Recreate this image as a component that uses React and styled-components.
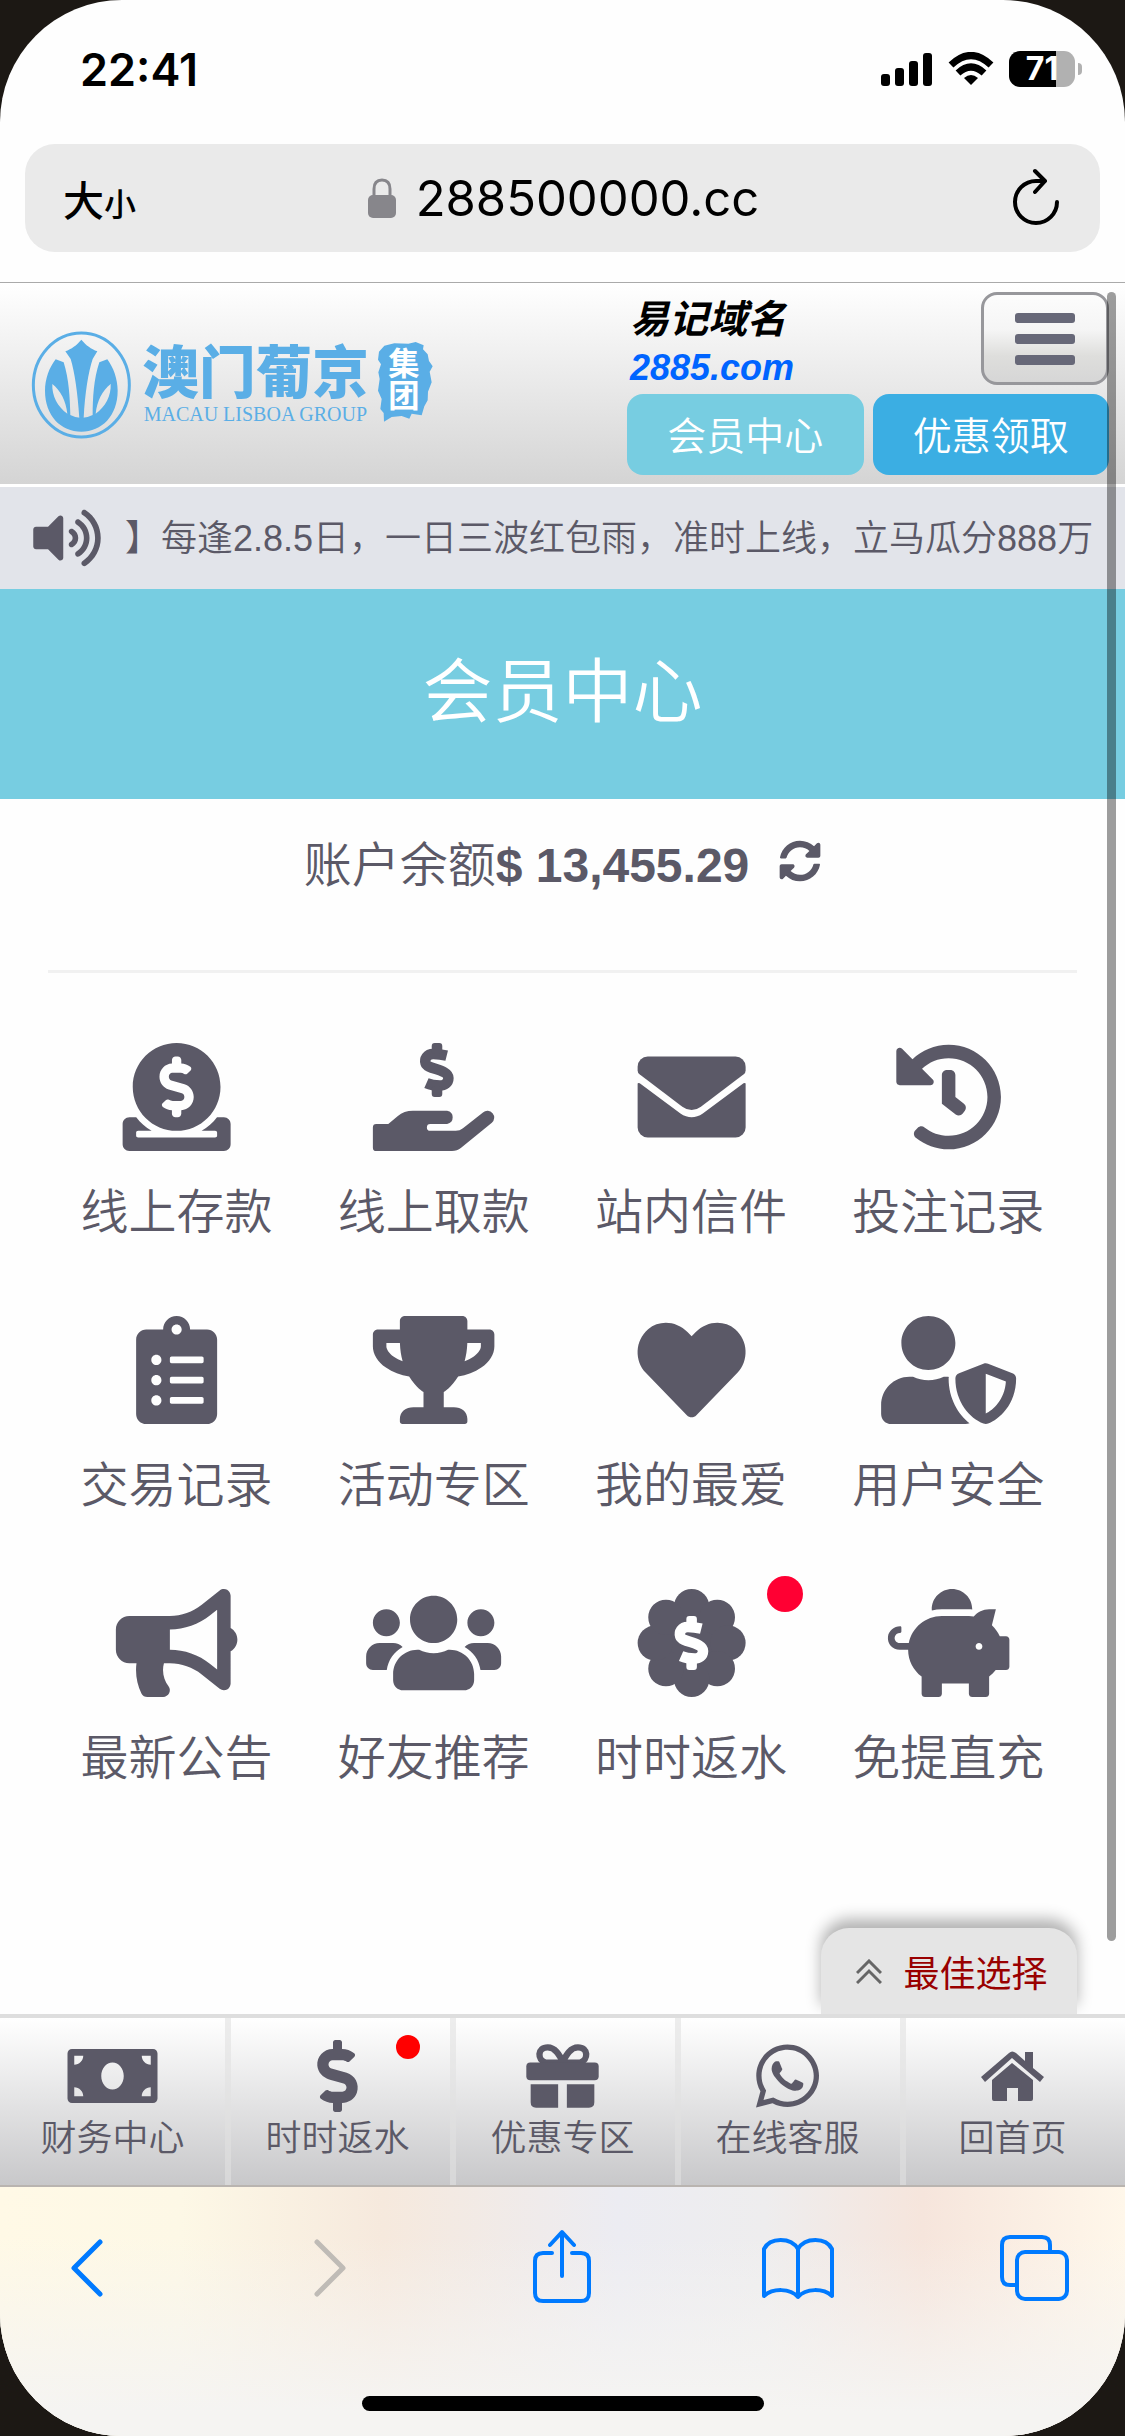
import React from 'react';
import styled, { createGlobalStyle } from 'styled-components';
import {
  FaBullhorn,
  FaClipboardList,
  FaDollarSign,
  FaDonate,
  FaHeart,
  FaHistory,
  FaMoneyBill,
  FaPiggyBank,
  FaSyncAlt,
  FaTrophy,
  FaUserShield,
  FaUsers,
  FaVolumeUp,
  FaWhatsapp,
} from 'react-icons/fa';

const ink = '#5b5967';
const sky = '#77cde1';
const iosBlue = '#007aff';

const DollarShape = ({ color }) => (
  <g fill={color}>
    <path
      d="M350 60C326 54 302 52 286 52C256 52 244 76 250 96C260 126 358 124 358 166C358 190 338 202 318 202C296 202 272 198 254 190"
      fill="none"
      stroke={color}
      strokeWidth="50"
    />
    <rect x="279" y="0" width="50" height="52" rx="14" />
    <rect x="279" y="204" width="50" height="52" rx="14" />
  </g>
);

const HandDollar = () => (
  <svg viewBox="0 0 576 512" fill="currentColor">
    <DollarShape color="currentColor" />
    <path d="M16 384H73L117 347Q148 321 190 321H352A32 32 0 0 1 352 384H272A16 16 0 0 0 272 416H393Q412 416 427 404L522 329A32 32 0 0 1 564 378L417 498Q400 512 375 512H16Q0 512 0 496V400Q0 384 16 384Z" />
  </svg>
);

const Envelope = () => (
  <svg viewBox="0 0 512 512" fill="currentColor">
    <path d="M48 64H464A48 48 0 0 1 512 112V130Q512 141 503 148L300 302Q256 334 212 302L9 148Q0 141 0 130V112A48 48 0 0 1 48 64Z" />
    <path d="M0 192Q2 187 10 191L203 334Q256 370 309 334L502 191Q510 187 512 192V400A48 48 0 0 1 464 448H48A48 48 0 0 1 0 400Z" />
  </svg>
);

const DollarBadge = () => (
  <svg viewBox="0 0 512 512" fill="currentColor">
    <circle cx="256" cy="256" r="190" />
    {[0, 45, 90, 135, 180, 225, 270, 315].map(angle => (
      <circle key={angle} cx="256" cy="84" r="84" transform={`rotate(${angle} 256 256)`} />
    ))}
    <g transform="translate(-48 128)">
      <DollarShape color="#fff" />
    </g>
  </svg>
);

const Gift = () => (
  <svg viewBox="78 372 216 191" fill="currentColor">
    <path
      d="M187 428H136C110 420 110 382 142 382C164 382 176 404 187 424C198 404 210 382 232 382C264 382 264 420 238 428Z"
      fill="none"
      stroke="currentColor"
      strokeWidth="19"
    />
    <rect x="78" y="427" width="216" height="53" rx="12" />
    <path d="M91 492H173V562H107Q91 562 91 546ZM199 492H281V546Q281 562 265 562H199Z" />
  </svg>
);

const House = () => (
  <svg viewBox="0 0 63 50" fill="currentColor">
    <path d="M0 26L28 2Q31 -1 35 2L44 10V1H52V17L63 26L59 31L31 7L4 31Z" />
    <path d="M11 29L31 12L52 29V48Q52 50 50 50H37V37H26V50H13Q11 50 11 48Z" />
  </svg>
);

const Logo = () => (
  <LogoArt viewBox="0 0 1260 390" role="img" aria-label="澳门葡京集团">
    <g fill="#5aaee6">
      <ellipse cx="169" cy="198" rx="144" ry="156" fill="none" stroke="#5aaee6" strokeWidth="9" />
      <path d="M169 62C184 80 198 89 217 97L203 120C190 160 180 220 176 298H163C158 220 149 160 137 120L121 97C140 89 154 80 169 62Z" />
      <path
        fillRule="evenodd"
        d="M92 121L116 130C132 180 135 240 136 288Q169 306 203 288C203 240 206 180 223 130L247 121C265 145 278 180 278 215C278 290 230 338 169 338C108 338 60 290 60 215C60 180 73 145 92 121ZM82 195C80 230 98 264 127 284C123 245 106 214 82 195ZM257 195C233 214 216 245 212 284C241 264 259 230 257 195Z"
      />
      <path d="M1062 98L1078 80L1108 73L1150 74L1172 69L1196 79L1194 91L1208 106L1212 126L1223 142L1214 158L1220 190L1209 218L1208 244L1198 262L1190 289L1160 284L1153 299L1130 291L1100 294L1077 308L1076 282L1066 270L1070 240L1059 215L1064 180L1060 160L1068 136L1059 122Z" />
      <text x="352" y="221" fontSize="170" fontWeight="900" fontFamily="'Noto Sans CJK SC', sans-serif">澳门葡京</text>
      <text x="356" y="307" fontSize="60" fontFamily="'Liberation Serif', serif">MACAU LISBOA GROUP</text>
    </g>
    <text
      x="1137"
      y="86"
      fill="#fff"
      fontSize="94"
      fontWeight="700"
      fontFamily="'Noto Sans CJK SC', sans-serif"
      writingMode="vertical-rl"
    >
      集团
    </text>
  </LogoArt>
);

const menu = [
  { label: '线上存款', icon: <FaDonate /> },
  { label: '线上取款', icon: <HandDollar /> },
  { label: '站内信件', icon: <Envelope /> },
  { label: '投注记录', icon: <FaHistory /> },
  { label: '交易记录', icon: <FaClipboardList /> },
  { label: '活动专区', icon: <FaTrophy /> },
  { label: '我的最爱', icon: <FaHeart /> },
  { label: '用户安全', icon: <FaUserShield /> },
  { label: '最新公告', icon: <FaBullhorn /> },
  { label: '好友推荐', icon: <FaUsers /> },
  { label: '时时返水', icon: <DollarBadge />, dot: true },
  { label: '免提直充', icon: <FaPiggyBank /> },
];

const tabs = [
  { label: '财务中心', icon: <FaMoneyBill />, height: 72 },
  { label: '时时返水', icon: <FaDollarSign />, height: 72, dot: true },
  { label: '优惠专区', icon: <Gift />, height: 64 },
  { label: '在线客服', icon: <FaWhatsapp />, height: 72 },
  { label: '回首页', icon: <House />, height: 50 },
];

const StatusBar = () => (
  <Status>
    <Clock>22:41</Clock>
    <StatusIcons>
      <svg width="52" height="33" viewBox="0 0 52 33">
        <rect x="0" y="21" width="9" height="12" rx="3" />
        <rect x="14" y="15" width="9" height="18" rx="3" />
        <rect x="28" y="8" width="9" height="25" rx="3" />
        <rect x="42" y="0" width="9" height="33" rx="3" />
      </svg>
      <svg width="46" height="34" viewBox="0 0 46 34">
        <g fill="none" stroke="#000" strokeWidth="7">
          <path d="M3 13Q23 -6 43 13" />
          <path d="M10 21Q23 9 36 21" />
        </g>
        <path d="M16 26Q23 20 30 26L23 33Z" />
      </svg>
      <Battery>
        <Charge>71</Charge>
      </Battery>
    </StatusIcons>
  </Status>
);

const BrowserBar = () => (
  <ToolBar>
    <ToolButton aria-label="后退">
      <svg width="80" height="80" viewBox="0 0 80 80"><path d="M53 14L27 40L53 66" strokeWidth="5" /></svg>
    </ToolButton>
    <ToolButton aria-label="前进" disabled>
      <svg width="80" height="80" viewBox="0 0 80 80"><path d="M33 14L59 40L33 66" strokeWidth="5" /></svg>
    </ToolButton>
    <ToolButton aria-label="分享">
      <svg width="80" height="80" viewBox="0 0 80 80">
        <path d="M31 25H22Q14 25 14 33V65Q14 73 22 73H60Q68 73 68 65V33Q68 25 60 25H51M41 48V5M29 17L41 4L53 17" />
      </svg>
    </ToolButton>
    <ToolButton aria-label="书签">
      <svg width="80" height="80" viewBox="0 0 80 80">
        <path d="M40 21C33 9 12 9 6 21V68C15 60 32 60 40 69C48 60 65 60 74 68V21C68 9 47 9 40 21V69" />
      </svg>
    </ToolButton>
    <ToolButton aria-label="标签页">
      <svg width="80" height="80" viewBox="0 0 80 80">
        <path d="M21 57H15Q7 57 7 49V17Q7 9 15 9H47Q55 9 55 17V23" />
        <rect x="22" y="24" width="50" height="47" rx="8" />
      </svg>
    </ToolButton>
  </ToolBar>
);

const App = () => (
  <>
    <GlobalStyle />
    <Screen>
      <StatusBar />
      <AddressBar>
        <TextSize type="button" aria-label="大小">大<small>小</small></TextSize>
        <Address>
          <svg width="28" height="40" viewBox="0 0 28 40">
            <path d="M6 18V11Q6 2 14 2T22 11V18" fill="none" stroke="#87868b" strokeWidth="3" />
            <rect y="17" width="28" height="23" rx="5" fill="#87868b" />
          </svg>
          288500000.cc
        </Address>
        <Reload type="button" aria-label="重新加载">
          <svg width="48" height="60" viewBox="0 0 48 60" fill="none" stroke="#000" strokeWidth="4" strokeLinecap="round" strokeLinejoin="round">
            <path d="M45 34A21 21 0 1 1 24 13H33M23 3L33 13L23 24" />
          </svg>
        </Reload>
      </AddressBar>

      <Page>
        <ScrollThumb />
        <Header>
          <Logo />
          <HeaderSide>
            <HeaderTop>
              <Domain>
                易记域名
                <a href="#domain">2885.com</a>
              </Domain>
              <MenuButton type="button" aria-label="菜单">
                <span />
                <span />
                <span />
              </MenuButton>
            </HeaderTop>
            <HeaderActions>
              <ActionButton type="button" $color={sky}>会员中心</ActionButton>
              <ActionButton type="button" $color="#3baee3">优惠领取</ActionButton>
            </HeaderActions>
          </HeaderSide>
        </Header>

        <Notice>
          <FaVolumeUp />
          <p>】每逢2.8.5日，一日三波红包雨，准时上线，立马瓜分888万</p>
        </Notice>

        <Banner>会员中心</Banner>

        <Main>
          <Balance>
            <span>账户余额<strong>$ 13,455.29</strong></span>
            <button type="button" aria-label="刷新余额"><FaSyncAlt /></button>
          </Balance>
          <MenuGrid>
            {menu.map(({ label, icon, dot }) => (
              <MenuItem href="#menu" key={label}>
                {icon}
                {label}
                {dot && <MenuDot />}
              </MenuItem>
            ))}
          </MenuGrid>
        </Main>

        <BestChoice type="button">
          <svg width="26" height="25" viewBox="0 0 26 25" fill="none" stroke="#666" strokeWidth="3">
            <path d="M1 14L13 2L25 14M1 24L13 12L25 24" />
          </svg>
          最佳选择
        </BestChoice>
        <TabBar>
          {tabs.map(({ label, icon, height, dot }) => (
            <Tab href="#tab" key={label}>
              <TabIcon $height={height}>{icon}</TabIcon>
              {label}
              {dot && <TabDot />}
            </Tab>
          ))}
        </TabBar>
      </Page>

      <Footer>
        <BrowserBar />
        <HomeIndicator />
      </Footer>
    </Screen>
  </>
);

const GlobalStyle = createGlobalStyle`
  * {
    box-sizing: border-box;
  }

  body {
    margin: 0;
    background: #1c1814;
    font-family: 'Liberation Sans', 'Noto Sans CJK SC', sans-serif;
    font-weight: 350;
    color: ${ink};
  }

  button {
    padding: 0;
    border: 0;
    background: none;
    color: inherit;
    font: inherit;
  }

  a {
    color: inherit;
    text-decoration: none;
  }

  svg {
    display: block;
    flex: none;
  }
`

const Screen = styled.div`
  display: flex;
  flex-direction: column;
  min-height: 100vh;
  overflow: hidden;
  border-radius: 122px;
  background: #fefefe;
`

const Status = styled.div`
  display: flex;
  align-items: center;
  justify-content: space-between;
  height: 144px;
  padding: 0 43px 6px 80px;
  color: #000;
`

const Clock = styled.time`
  font: 600 45px Inter, sans-serif;
`

const StatusIcons = styled.div`
  display: flex;
  align-items: center;
  gap: 15px;
`

const Battery = styled.div`
  display: flex;
  align-items: center;

  &::after {
    content: '';
    width: 4px;
    height: 12px;
    margin-left: 3px;
    border-radius: 0 6px 6px 0;
    background: #b1b1b1;
  }
`

const Charge = styled.span`
  width: 66px;
  border-radius: 11px;
  background: linear-gradient(90deg, #000 71%, #b1b1b1 71%);
  color: #fff;
  font: 700 32px/36px Inter, sans-serif;
  text-align: center;
`

const AddressBar = styled.div`
  display: flex;
  align-items: center;
  justify-content: space-between;
  height: 108px;
  margin: 0 25px 30px;
  padding: 0 40px 0 38px;
  border-radius: 30px;
  background: #eaeaea;
  color: #000;
`

const TextSize = styled.button`
  width: 76px;
  font-size: 41px;
  font-weight: 500;
  text-align: left;
  white-space: nowrap;

  small {
    font-size: 32px;
  }
`

const Address = styled.div`
  display: flex;
  align-items: center;
  gap: 20px;
  padding-left: 4px;
  font: 400 49px Inter, sans-serif;
`

const Reload = styled.button`
  display: flex;
  justify-content: flex-end;
  width: 76px;
`

const Page = styled.div`
  position: relative;
  display: flex;
  flex: 1;
  flex-direction: column;
  border-top: 1px solid #aaa;
`

const ScrollThumb = styled.div`
  position: absolute;
  z-index: 2;
  top: 9px;
  right: 9px;
  bottom: 246px;
  width: 9px;
  border-radius: 5px;
  background: rgba(0, 0, 0, 0.38);
`

const Header = styled.header`
  display: flex;
  align-items: center;
  justify-content: space-between;
  height: 204px;
  padding: 0 16px 0 25px;
  border-bottom: 3px solid #fff;
  background: linear-gradient(#fff, #d4d4d4);
`

const LogoArt = styled.svg`
  width: 420px;
  height: 130px;
`

const HeaderSide = styled.div`
  display: flex;
  flex-direction: column;
  gap: 9px;
  width: 482px;
`

const HeaderTop = styled.div`
  display: flex;
  justify-content: space-between;
  height: 93px;
`

const Domain = styled.div`
  display: flex;
  flex-direction: column;
  padding: 2px 0 0 3px;
  color: #000;
  font-size: 39px;
  font-style: italic;
  font-weight: 700;
  line-height: 52px;

  a {
    color: #0064ff;
    font-size: 36px;
    line-height: 44px;
  }
`

const MenuButton = styled.button`
  display: flex;
  flex-direction: column;
  align-items: center;
  justify-content: center;
  gap: 11px;
  width: 128px;
  height: 93px;
  border: 3px solid #97979b;
  border-radius: 16px;
  background: linear-gradient(#fcfcfc, #f5f5f5 40%, #dededc 70%, #d6d6d6);

  span {
    width: 60px;
    height: 10px;
    border-radius: 3px;
    background: #676878;
  }
`

const HeaderActions = styled.div`
  display: flex;
  gap: 9px;
`

const ActionButton = styled.button`
  flex: 1;
  height: 81px;
  padding-bottom: 4px;
  border-radius: 16px;
  background: ${props => props.$color};
  color: #fff;
  font-size: 39px;
`

const Notice = styled.div`
  display: flex;
  align-items: center;
  gap: 24px;
  height: 102px;
  padding-left: 33px;
  overflow: hidden;
  background: #e2e4ea;
  font-size: 36px;
  white-space: nowrap;

  svg {
    width: 68px;
    height: 60px;
  }

  p {
    margin: 0;
    padding-bottom: 6px;
  }
`

const Banner = styled.h1`
  margin: 0;
  background: ${sky};
  color: #fff;
  font-size: 70px;
  font-weight: 350;
  line-height: 208px;
  height: 210px;
  text-align: center;
`

const Main = styled.main`
  flex: 1;
  padding: 0 48px;
`

const Balance = styled.div`
  display: flex;
  align-items: center;
  justify-content: center;
  gap: 30px;
  height: 174px;
  padding-bottom: 48px;
  border-bottom: 3px solid #f1f1f1;
  font-size: 48px;

  strong {
    font-weight: 700;
  }

  svg {
    width: 42px;
    height: 42px;
  }
`

const MenuGrid = styled.nav`
  display: grid;
  grid-template-columns: repeat(4, 1fr);
  row-gap: 65px;
  padding-top: 70px;
`

const MenuItem = styled.a`
  position: relative;
  display: flex;
  flex-direction: column;
  align-items: center;
  gap: 24px;
  font-size: 48px;
  line-height: 76px;

  svg {
    width: 100%;
    height: 108px;
  }
`

const MenuDot = styled.i`
  position: absolute;
  top: -13px;
  right: 17px;
  width: 36px;
  height: 36px;
  border-radius: 50%;
  background: #ff0033;
`

const BestChoice = styled.button`
  display: flex;
  align-items: center;
  align-self: flex-end;
  justify-content: center;
  gap: 21px;
  width: 256px;
  height: 86px;
  margin-right: 48px;
  padding-left: 6px;
  border-radius: 28px 28px 0 0;
  background: #e5e5e5;
  box-shadow: 0 -9px 15px rgba(0, 0, 0, 0.3);
  color: #990000;
  font-size: 36px;
  font-weight: 400;
`

const TabBar = styled.nav`
  position: relative;
  display: grid;
  grid-template-columns: repeat(5, 1fr);
  height: 173px;
  border-top: 4px solid #dedede;
  border-bottom: 2px solid #b9b4b0;
  background: linear-gradient(#fff, #c8c8ca);
`

const Tab = styled.a`
  position: relative;
  display: flex;
  flex-direction: column;
  align-items: center;
  padding-top: 21px;
  font-size: 36px;
  line-height: 52px;

  & + & {
    box-shadow: inset 6px 0 rgba(225, 225, 225, 0.6);
  }
`

const TabIcon = styled.span`
  display: flex;
  align-items: center;
  width: 100%;
  height: 74px;

  svg {
    width: 100%;
    height: ${props => props.$height}px;
  }
`

const TabDot = styled.i`
  position: absolute;
  top: 17px;
  right: 30px;
  width: 24px;
  height: 24px;
  border-radius: 50%;
  background: #ff0000;
`

const Footer = styled.footer`
  height: 249px;
  background:
    linear-gradient(rgba(245, 245, 243, 0) 20%, #f5f4f2 90%),
    linear-gradient(90deg, #fff9e6, #fdf8e6 16%, #f6e9dd 34%, #ececf2 55%, #eeedee 68%, #f6e5dc 82%, #fff7ea);
`

const ToolBar = styled.div`
  display: flex;
  justify-content: space-between;
  padding: 41px 50px 88px 47px;
`

const ToolButton = styled.button`
  svg {
    fill: none;
    stroke: ${props => (props.disabled ? '#bfbbb6' : iosBlue)};
    stroke-width: 4;
    stroke-linecap: round;
    stroke-linejoin: round;
  }
`

const HomeIndicator = styled.div`
  width: 402px;
  height: 15px;
  margin: 0 auto;
  border-radius: 8px;
  background: #000;
`

export default App;
